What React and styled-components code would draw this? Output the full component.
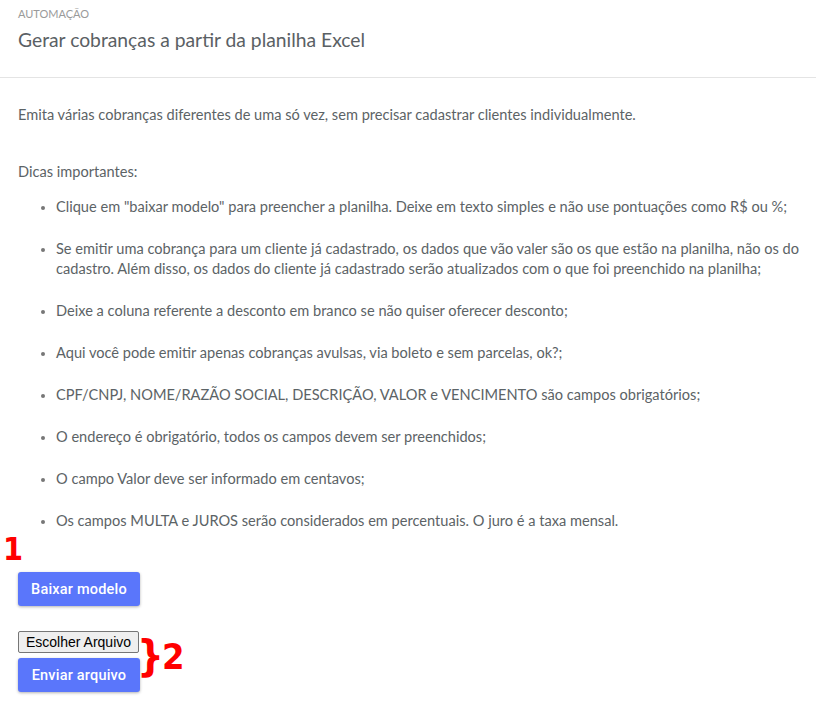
import React from "react";
import styled, { createGlobalStyle } from "styled-components";

const Global = createGlobalStyle`
  html, body { margin: 0; padding: 0; background: #fff; }
  body { font-family: Lato, "Open Sans", sans-serif; color: #5c6366; }
`;

const Page = styled.div`
  position: relative;
  width: 816px;
  min-height: 701px;
`;

const Header = styled.header`
  height: 78px;
  box-sizing: border-box;
  padding: 7px 18px 0;
  border-bottom: 1px solid #e4e4e4;
`;

const Eyebrow = styled.div`
  font-size: 11px;
  line-height: 14px;
  color: #9a9a9a;
  text-transform: uppercase;
`;

const Title = styled.h1`
  margin: 6px 0 0;
  font-size: 19.3px;
  line-height: 26px;
  font-weight: 400;
  color: #5a6064;
`;

const Content = styled.main`
  padding: 27px 0 0 18px;
  font-size: 14.6px;
  line-height: 20px;
`;

const Para = styled.p`
  margin: 0 0 ${(p) => p.$after || 0}px;
`;

const List = styled.ul`
  margin: 0;
  padding-left: 38px;
  li { margin-bottom: 22px; }
  li::marker { color: #777; font-size: 12px; }
`;

const Actions = styled.div`
  display: flex;
  flex-direction: column;
  align-items: flex-start;
  gap: ${(p) => p.$gap || 0}px;
  margin-top: ${(p) => p.$top || 0}px;
`;

const PrimaryButton = styled.button`
  height: 34px;
  width: 122px;
  border: none;
  border-radius: 3px;
  background: #5a76fb;
  color: #fff;
  font-family: Roboto, "Noto Sans", sans-serif;
  font-size: 14.5px;
  font-weight: 500;
  letter-spacing: 0.2px;
  box-shadow: 0 1px 3px rgba(0, 0, 0, 0.3);
  cursor: pointer;
  padding: 0;
`;

const FileButton = styled.button`
  height: 22px;
  width: 121px;
  border: 1px solid #767676;
  border-radius: 2px;
  background: #efefef;
  color: #000;
  font-family: "Liberation Sans", Arial, sans-serif;
  font-size: 14px;
  padding: 0 4px;
  white-space: nowrap;
`;

const Annot = styled.span`
  position: absolute;
  left: ${(p) => p.$x}px;
  top: ${(p) => p.$y}px;
  color: #ff0000;
  font-family: "DejaVu Sans Condensed", "DejaVu Sans", sans-serif;
  font-weight: 700;
  font-size: ${(p) => p.$size}px;
  line-height: 1;
  white-space: nowrap;
`;

const AnnotPart = styled.span`
  font-size: ${(p) => p.$size}px;
  vertical-align: ${(p) => p.$shift || 0}px;
  margin-left: ${(p) => p.$gap || 0}px;
`;

const items = [
  'Clique em "baixar modelo" para preencher a planilha. Deixe em texto simples e não use pontuações como R$ ou %;',
  "Se emitir uma cobrança para um cliente já cadastrado, os dados que vão valer são os que estão na planilha, não os do cadastro. Além disso, os dados do cliente já cadastrado serão atualizados com o que foi preenchido na planilha;",
  "Deixe a coluna referente a desconto em branco se não quiser oferecer desconto;",
  "Aqui você pode emitir apenas cobranças avulsas, via boleto e sem parcelas, ok?;",
  "CPF/CNPJ, NOME/RAZÃO SOCIAL, DESCRIÇÃO, VALOR e VENCIMENTO são campos obrigatórios;",
  "O endereço é obrigatório, todos os campos devem ser preenchidos;",
  "O campo Valor deve ser informado em centavos;",
  "Os campos MULTA e JUROS serão considerados em percentuais. O juro é a taxa mensal.",
];

export default function App() {
  return (
    <Page>
      <Global />
      <Header>
        <Eyebrow>Automação</Eyebrow>
        <Title>Gerar cobranças a partir da planilha Excel</Title>
      </Header>
      <Content>
        <Para $after={37}>
          Emita várias cobranças diferentes de uma só vez, sem precisar cadastrar clientes individualmente.
        </Para>
        <Para $after={15}>Dicas importantes:</Para>
        <List>
          {items.map((t) => (
            <li key={t}>{t}</li>
          ))}
        </List>
        <Actions $top={41}>
          <PrimaryButton>Baixar modelo</PrimaryButton>
        </Actions>
        <Actions $top={25} $gap={5}>
          <FileButton>Escolher Arquivo</FileButton>
          <PrimaryButton>Enviar arquivo</PrimaryButton>
        </Actions>
      </Content>
      <Annot $x={3} $y={533} $size={32}>1</Annot>
      <Annot $x={137} $y={636} $size={42}>
        {"}"}
        <AnnotPart $size={36} $shift={2} $gap={-2}>2</AnnotPart>
      </Annot>
    </Page>
  );
}
